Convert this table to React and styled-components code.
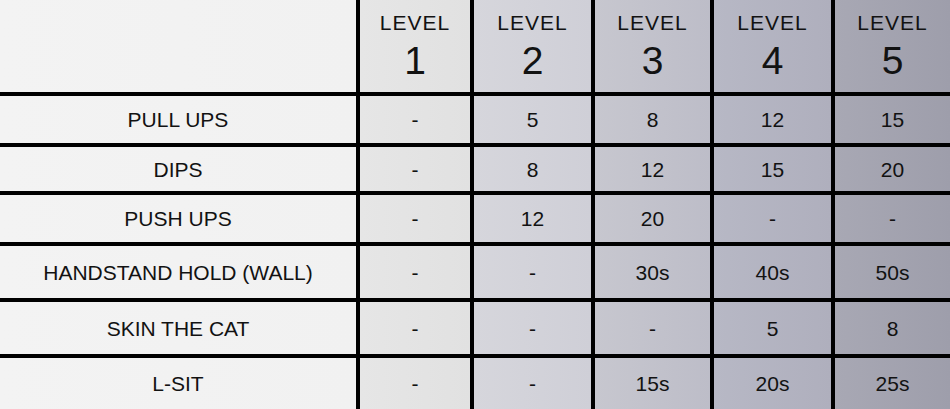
import React from "react";
import styled, { createGlobalStyle } from "styled-components";

const GlobalStyle = createGlobalStyle`
  html, body {
    margin: 0;
    padding: 0;
    background: #000;
  }
  body {
    font-family: "Liberation Sans", Arial, sans-serif;
  }
`;

// column shades, light to dark (left edge / right edge)
const shades = [
  ["#f3f3f3", "#f1f1f1"],
  ["#e6e6e6", "#e1e1e1"],
  ["#d6d6dc", "#cfcfd7"],
  ["#c7c7cf", "#bdbdc8"],
  ["#b7b8c5", "#afafbd"],
  ["#a8a8b4", "#9e9eab"],
];

const Table = styled.div`
  display: grid;
  grid-template-columns: 356px 110px 117px 115px 117px 115px;
  grid-template-rows: 92px 47px 44px 47px 52px 52px 51px;
  gap: 4px;
  width: 950px;
  height: 409px;
  background: #000;
  overflow: hidden;
`;

const Cell = styled.div`
  display: flex;
  align-items: center;
  justify-content: center;
  background: ${({ $col }) =>
    `linear-gradient(90deg, ${shades[$col][0]}, ${shades[$col][1]})`};
  color: #121212;
  font-size: 21px;
  line-height: 1;
`;

const HeadCell = styled(Cell)`
  flex-direction: column;
  justify-content: flex-start;
  padding-top: 12px;
  gap: 8px;
`;

const HeadLabel = styled.span`
  font-size: 21px;
  line-height: 21px;
  letter-spacing: 1px;
`;

const HeadNum = styled.span`
  font-size: 39px;
  line-height: 39px;
`;

const rows = [
  ["PULL UPS", "-", "5", "8", "12", "15"],
  ["DIPS", "-", "8", "12", "15", "20"],
  ["PUSH UPS", "-", "12", "20", "-", "-"],
  ["HANDSTAND HOLD (WALL)", "-", "-", "30s", "40s", "50s"],
  ["SKIN THE CAT", "-", "-", "-", "5", "8"],
  ["L-SIT", "-", "-", "15s", "20s", "25s"],
];

export default function App() {
  return (
    <>
      <GlobalStyle />
      <Table>
        <Cell $col={0} />
        {[1, 2, 3, 4, 5].map((n) => (
          <HeadCell key={n} $col={n}>
            <HeadLabel>LEVEL</HeadLabel>
            <HeadNum>{n}</HeadNum>
          </HeadCell>
        ))}
        {rows.map((row) =>
          row.map((val, i) => (
            <Cell key={row[0] + i} $col={i}>
              {val}
            </Cell>
          ))
        )}
      </Table>
    </>
  );
}
